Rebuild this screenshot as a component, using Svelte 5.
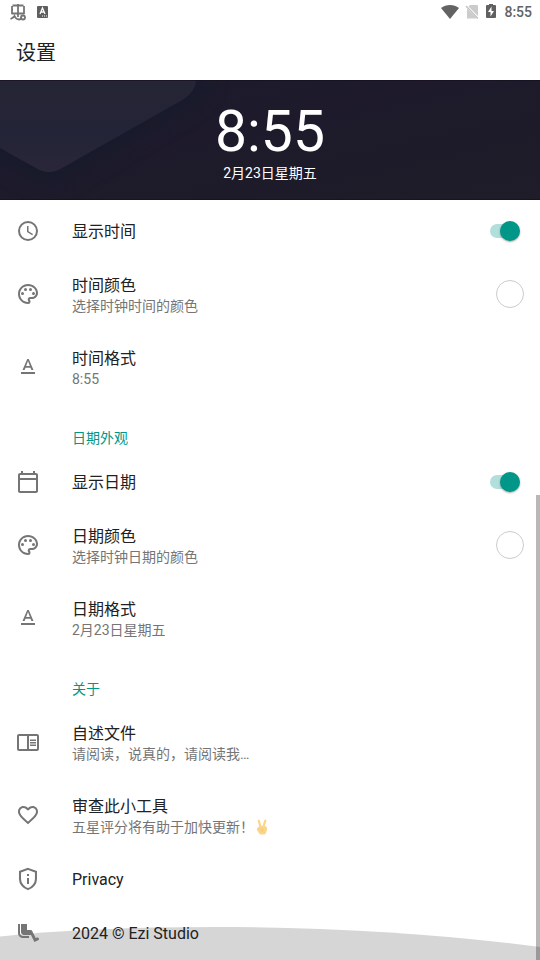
<script>
  let showTime = $state(true);
  let showDate = $state(true);
</script>

{#snippet palette()}
  <svg class="icon" viewBox="0 0 24 24" aria-hidden="true">
    <path d="M12 22C6.49 22 2 17.51 2 12S6.49 2 12 2s10 4.04 10 9c0 3.31-2.69 6-6 6h-1.77c-.28 0-.5.22-.5.5 0 .12.05.23.13.33.41.47.64 1.06.64 1.67A2.5 2.5 0 0 1 12 22zm0-18c-4.41 0-8 3.59-8 8s3.59 8 8 8c.28 0 .5-.22.5-.5a.54.54 0 0 0-.14-.35c-.41-.46-.63-1.05-.63-1.65a2.5 2.5 0 0 1 2.5-2.5H16c2.21 0 4-1.79 4-4 0-3.86-3.59-7-8-7z" />
    <circle cx="6.5" cy="11.5" r="1.5" /><circle cx="9.5" cy="7.5" r="1.5" />
    <circle cx="14.5" cy="7.5" r="1.5" /><circle cx="17.5" cy="11.5" r="1.5" />
  </svg>
{/snippet}

{#snippet letter()}
  <svg class="icon" viewBox="0 0 24 24" aria-hidden="true">
    <path d="M5 17v2h14v-2H5zm4.5-4.2h5l.9 2.2h2.1L12.75 4h-1.5L6.5 15h2.1l.9-2.2zM12 5.98L13.87 11h-3.74L12 5.98z" />
  </svg>
{/snippet}

<div class="page">
  <header>
    <div class="status">
      <svg class="debug" viewBox="0 0 18 18" aria-hidden="true">
        <path d="M3.500 2.500h11M9 1v13M3 3v8M15 3v8M3 6.500h1M2.500 10.500h13M1.500 16Q4 15 5.500 13Q7 16.500 10 16.500Q12 16.500 12.500 14.500" />
        <circle cx="14" cy="14.500" r="2" />
      </svg>
      <svg class="keyboard" viewBox="0 0 12 14" aria-hidden="true">
        <rect width="11" height="12" x="0" y="1" rx="1" fill="#5f5f5f" />
        <path d="M3 9l2.500-6L8 9M4 7h3" fill="none" stroke="#fff" stroke-width="1.300" />
        <path d="M5 11h1m1 0h1m1 0h1" stroke="#fff" />
      </svg>
      <span class="fill"></span>
      <svg class="wifi" viewBox="0 0 18 14" aria-hidden="true">
        <path d="M0 3C5-1 13-1 18 3L9 14z" fill="#636363" />
      </svg>
      <svg class="sim" viewBox="0 0 14 14" aria-hidden="true">
        <path d="M5 0h7q1 0 1 1v10L3.500 1.500zM2 3.500l10 10H2z" fill="#cbcbcb" />
        <path d="M1 1l12 12.500" stroke="#c0c0c0" stroke-width="1.300" />
      </svg>
      <svg class="battery" viewBox="0 0 10 16" aria-hidden="true">
        <path d="M3 0h4v1h2q1 0 1 1v11q0 1-1 1H1q-1 0-1-1V2q0-1 1-1h2z" fill="#606060" />
        <path d="M5.500 2.500L2 8h2.500v4.500L8 7H5.500z" fill="#fff" />
      </svg>
      <span class="clock">8:55</span>
    </div>
    <h1>设置</h1>
  </header>

  <section class="preview">
    <svg class="wallpaper" viewBox="0 0 540 120" preserveAspectRatio="xMinYMin slice" aria-hidden="true">
      <defs>
        <linearGradient id="night" x1="0" y1="0" x2="1" y2="1">
          <stop offset="0" stop-color="#191b2b" />
          <stop offset=".4" stop-color="#1e1a2c" />
          <stop offset=".7" stop-color="#1d1b29" />
          <stop offset="1" stop-color="#1e1d28" />
        </linearGradient>
        <linearGradient id="tile" x1="0" y1="0" x2="0" y2="1">
          <stop offset="0" stop-color="#262535" />
          <stop offset=".55" stop-color="#232437" />
          <stop offset="1" stop-color="#292638" />
        </linearGradient>
        <filter id="soft" x="-20%" y="-40%" width="150%" height="200%" color-interpolation-filters="sRGB">
          <feGaussianBlur stdDeviation="10" />
        </filter>
      </defs>
      <rect width="540" height="120" fill="url(#night)" />
      <path d="M-30-30H206V4Q204 16 190 24L66 98Q50 106 34 98L-30 66z" fill="#171b2b" filter="url(#soft)" />
      <path d="M0 0H196Q195 12 184 19L62 88Q49 96 36 88L0 68z" fill="url(#tile)" />
      <path d="M0 0H540V1H0zM0 119H540V120H0z" fill="#15101f" opacity=".7" />
    </svg>
    <time class="big">8:55</time>
    <span class="date">2月23日星期五</span>
  </section>

  <main>
    <label class="row single">
      <svg class="icon" viewBox="0 0 24 24" aria-hidden="true">
        <path d="M12 2a10 10 0 1 0 0 20 10 10 0 0 0 0-20zm0 18a8 8 0 1 1 0-16 8 8 0 0 1 0 16zm.5-13H11v6l5.250 3.150.750-1.230-4.500-2.670z" />
      </svg>
      <span class="text"><span class="title">显示时间</span></span>
      <input type="checkbox" role="switch" bind:checked={showTime} />
    </label>
    <button class="row">
      {@render palette()}
      <span class="text"><span class="title">时间颜色</span><span class="sub">选择时钟时间的颜色</span></span>
      <span class="swatch"></span>
    </button>
    <button class="row">
      {@render letter()}
      <span class="text"><span class="title">时间格式</span><span class="sub">8:55</span></span>
    </button>

    <h2>日期外观</h2>
    <label class="row single">
      <svg class="icon" viewBox="0 0 24 24" aria-hidden="true">
        <path d="M20 3h-1V1h-2v2H7V1H5v2H4c-1.100 0-2 .9-2 2v16c0 1.100.9 2 2 2h16c1.100 0 2-.9 2-2V5c0-1.100-.9-2-2-2zm0 18H4V10h16v11zm0-13H4V5h16v3z" />
      </svg>
      <span class="text"><span class="title">显示日期</span></span>
      <input type="checkbox" role="switch" bind:checked={showDate} />
    </label>
    <button class="row">
      {@render palette()}
      <span class="text"><span class="title">日期颜色</span><span class="sub">选择时钟日期的颜色</span></span>
      <span class="swatch"></span>
    </button>
    <button class="row">
      {@render letter()}
      <span class="text"><span class="title">日期格式</span><span class="sub">2月23日星期五</span></span>
    </button>

    <h2>关于</h2>
    <button class="row">
      <svg class="icon" viewBox="0 0 24 24" aria-hidden="true">
        <path d="M21 4H3c-1.100 0-2 .9-2 2v13c0 1.100.9 2 2 2h18c1.100 0 2-.9 2-2V6c0-1.100-.9-2-2-2zM3 19V6h8v13H3zm18 0h-8V6h8v13zm-7-9.500h6V11h-6zm0 2.500h6v1.500h-6zm0 2.500h6V16h-6z" />
      </svg>
      <span class="text"><span class="title">自述文件</span><span class="sub">请阅读，说真的，请阅读我…</span></span>
    </button>
    <button class="row">
      <svg class="icon" viewBox="0 0 24 24" aria-hidden="true">
        <path d="M16.500 3c-1.740 0-3.410.81-4.500 2.090C10.910 3.810 9.240 3 7.500 3 4.420 3 2 5.420 2 8.500c0 3.780 3.400 6.860 8.550 11.540L12 21.350l1.450-1.320C18.600 15.360 22 12.280 22 8.500 22 5.420 19.580 3 16.500 3zm-4.400 15.550l-.1.100-.1-.1C7.140 14.240 4 11.390 4 8.500 4 6.500 5.500 5 7.500 5c1.540 0 3.040.99 3.570 2.360h1.870C13.460 5.990 14.960 5 16.500 5c2 0 3.500 1.500 3.500 3.500 0 2.890-3.140 5.740-7.900 10.050z" />
      </svg>
      <span class="text">
        <span class="title">审查此小工具</span>
        <span class="sub emoji">五星评分将有助于加快更新！
          <svg viewBox="0 0 12 16" role="img" aria-label="胜利手势">
            <path d="M4.500 8L2.800 1.800M7.500 7.500L9.300 1.600" fill="none" stroke="#fbd588" stroke-width="2.200" stroke-linecap="round" />
            <path d="M2.500 8Q5 6 9 7q2.500.5 2 3.500L10 14q-.5 1.500-2.500 1.500H5Q3.500 15.500 2.500 13.500L.8 10.500q-.3-1.500 1.700-2.500z" fill="#fbd588" />
            <path d="M2.500 10.500l3-1.500 1.500 1.500-2.500 1.500M7.500 11q-2 .5-1.500 2.500" fill="none" stroke="#efc373" stroke-width=".6" />
          </svg>
        </span>
      </span>
    </button>
    <a class="row single" href="#privacy">
      <svg class="icon" viewBox="0 0 24 24" aria-hidden="true">
        <path d="M12 2l7 2.630v6.450c0 4.180-2.880 8.040-7 9.330-4.120-1.290-7-5.150-7-9.330V4.630z" transform="translate(-1.700 -.3) scale(1.140 1.100)" fill="none" stroke="currentColor" stroke-width="1.800" />
        <path d="M11 7h2v2h-2zm0 4h2v6h-2z" />
      </svg>
      <span class="text"><span class="title">Privacy</span></span>
    </a>
    <div class="row single">
      <svg class="icon" viewBox="0 0 24 24" aria-hidden="true">
        <path d="M4 12V3H2v9c0 2.760 2.240 5 5 5h6v-2H7c-1.660 0-3-1.340-3-3zm18.830 5.240c-.38-.72-1.290-.97-2.030-.63l-1.090.5-3.410-6.980c-.34-.68-1.030-1.120-1.790-1.120L11 9V3H5v8c0 1.660 1.340 3 3 3h7l3.410 7 3.720-1.700c.77-.36 1.100-1.300.7-2.060z" />
      </svg>
      <span class="text"><span class="title">2024 © Ezi Studio</span></span>
    </div>
    <svg class="hill" viewBox="0 0 540 33" preserveAspectRatio="none" aria-hidden="true">
      <path d="M0 9.500Q90 0 216 0C330 0 440 7 540 20V33H0z" fill="#d6d6d6" />
    </svg>
  </main>
  <div class="scrollbar"></div>
</div>

<style>
  :global(body) {
    margin: 0;
    background: #fff;
  }
  .page {
    position: relative;
    overflow: hidden;
    font-family: Roboto, "Noto Sans CJK SC", sans-serif;
    color: #212121;
  }
  header {
    height: 80px;
  }
  .status {
    display: flex;
    align-items: center;
    height: 24px;
    padding: 0 8px 0 9px;
  }
  .debug {
    width: 18px;
    height: 18px;
    margin-right: 10px;
    fill: none;
    stroke: #757575;
    stroke-width: 1.8;
  }
  .keyboard {
    width: 12px;
    height: 14px;
  }
  .fill {
    flex: 1;
  }
  .wifi {
    width: 18px;
    height: 14px;
    margin-right: 6px;
  }
  .sim {
    width: 14px;
    height: 14px;
    margin-right: 7px;
  }
  .battery {
    width: 10px;
    height: 16px;
    margin-right: 8px;
  }
  .clock {
    font-size: 14px;
    font-weight: 500;
    line-height: 24px;
    color: #636363;
  }
  h1 {
    margin: 0;
    padding: 12px 16px;
    font-size: 20px;
    font-weight: 400;
    line-height: 34px;
  }
  .preview {
    position: relative;
    display: flex;
    flex-direction: column;
    align-items: center;
    height: 120px;
    box-sizing: border-box;
    padding-top: 20px;
    color: #fff;
    background: #1e1b29;
  }
  .wallpaper {
    position: absolute;
    inset: 0;
    width: 100%;
    height: 100%;
  }
  .big,
  .date {
    position: relative;
  }
  .big {
    font-size: 57px;
    line-height: 64px;
  }
  .date {
    font-size: 14px;
    line-height: 18px;
  }
  main {
    position: relative;
    padding-top: 4px;
  }
  .row {
    position: relative;
    z-index: 1;
    display: flex;
    align-items: center;
    width: 100%;
    min-height: 73px;
    box-sizing: border-box;
    padding: 0 16px 1px;
    border: 0;
    background: none;
    color: inherit;
    font: inherit;
    text-align: left;
    text-decoration: none;
  }
  .single {
    min-height: 54px;
    padding-bottom: 0;
  }
  .icon {
    flex: none;
    width: 24px;
    height: 24px;
    margin-right: 32px;
    fill: #757575;
    color: #757575;
  }
  .text {
    display: flex;
    flex: 1;
    flex-direction: column;
    align-self: flex-start;
    padding-top: 16px;
  }
  .title {
    font-size: 16px;
    line-height: 24px;
  }
  .sub {
    font-size: 14px;
    line-height: 16px;
    color: #757575;
  }
  .emoji {
    display: flex;
    align-items: center;
  }
  .emoji svg {
    width: 14px;
    height: 16px;
    margin-left: 1px;
  }
  h2 {
    margin: 0;
    padding: 24px 16px 7px 72px;
    font-size: 14px;
    font-weight: 400;
    line-height: 20px;
    color: #009688;
  }
  input {
    appearance: none;
    position: relative;
    flex: none;
    width: 28px;
    height: 14px;
    margin: 0 6px 0 0;
    border-radius: 7px;
    background: #bdbdbd;
  }
  input::before {
    content: "";
    position: absolute;
    top: -3px;
    left: -2px;
    width: 20px;
    height: 20px;
    border-radius: 50%;
    background: #fafafa;
    box-shadow: 0 1px 2px rgba(0, 0, 0, 0.35);
  }
  input:checked {
    background: #b2dfdb;
  }
  input:checked::before {
    left: 10px;
    background: #009688;
  }
  .swatch {
    width: 28px;
    height: 28px;
    box-sizing: border-box;
    border: 1px solid #ccc;
    border-radius: 50%;
    background: #fff;
  }
  .hill {
    position: absolute;
    bottom: 0;
    left: 0;
    width: 100%;
    height: 33px;
  }
  .scrollbar {
    position: absolute;
    z-index: 2;
    right: 0;
    bottom: 0;
    width: 4px;
    height: 465px;
    background: rgba(0, 0, 0, 0.28);
  }
</style>
